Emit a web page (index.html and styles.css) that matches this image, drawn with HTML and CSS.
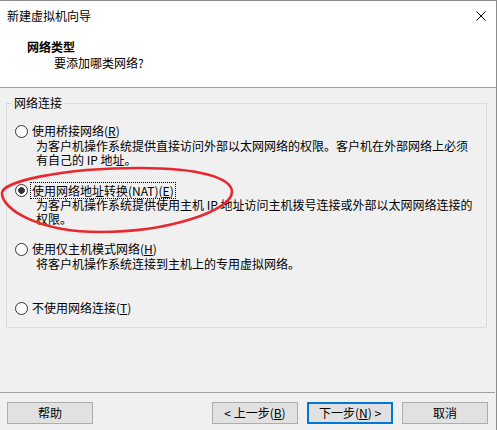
FILE: index.html
```html
<!DOCTYPE html>
<html lang="zh-CN">
<head>
<meta charset="utf-8">
<title>新建虚拟机向导</title>
<link rel="stylesheet" href="styles.css">
</head>
<body>
<div class="window">
  <div class="top">
    <div class="titlebar">
      <span class="title">新建虚拟机向导</span>
      <svg class="close" width="10" height="10" viewBox="0 0 10 10"><path d="M0.5 0.5 L9.5 9.5 M9.5 0.5 L0.5 9.5" stroke="#000" stroke-width="1" fill="none"/></svg>
    </div>
    <div class="header">
      <div class="h-title">网络类型</div>
      <div class="h-sub">要添加哪类网络?</div>
    </div>
  </div>
  <div class="body">
    <fieldset class="group">
      <legend>网络连接</legend>
      <div class="option">
        <div class="opt-label"><span class="radio"></span><span class="opt-text">使用桥接网络(<u>R</u>)</span></div>
        <div class="opt-desc">为客户机操作系统提供直接访问外部以太网网络的权限。客户机在外部网络上必须<br>有自己的 IP 地址。</div>
      </div>
      <div class="option">
        <div class="opt-label"><span class="radio checked"></span><span class="opt-text focus">使用网络地址转换(NAT)(<u>E</u>)</span></div>
        <div class="opt-desc">为客户机操作系统提供使用主机 IP 地址访问主机拨号连接或外部以太网网络连接的<br>权限。</div>
      </div>
      <div class="option">
        <div class="opt-label"><span class="radio"></span><span class="opt-text">使用仅主机模式网络(<u>H</u>)</span></div>
        <div class="opt-desc">将客户机操作系统连接到主机上的专用虚拟网络。</div>
      </div>
      <div class="option last">
        <div class="opt-label"><span class="radio"></span><span class="opt-text">不使用网络连接(<u>T</u>)</span></div>
      </div>
    </fieldset>
  </div>
  <div class="footer">
    <div class="sep"></div>
    <div class="buttons">
      <button class="btn">帮助</button>
      <span class="spacer"></span>
      <button class="btn">&lt; 上一步(<u>B</u>)</button>
      <button class="btn default">下一步(<u>N</u>) &gt;</button>
      <button class="btn">取消</button>
    </div>
  </div>
  <svg class="annotation" width="497" height="430" viewBox="0 0 497 430">
    <path d="M 2 193 C 2 182, 60 168, 140 168 C 200 168, 232 178, 232 192 C 232 210, 170 232, 100 232 C 40 232, 2 210, 2 193 Z" fill="none" stroke="#e8282e" stroke-width="2.6"/>
  </svg>
</div>
</body>
</html>
```

FILE: styles.css
```css
html, body {
  margin: 0;
  padding: 0;
  background: #f0f0f0;
}

body {
  font-family: "Noto Sans CJK SC", "Microsoft YaHei", sans-serif;
  font-size: 12px;
  color: #000;
}

.window {
  position: relative;
  width: 497px;
  height: 430px;
  box-sizing: border-box;
  border-top: 1px solid #8c8c8c;
  border-right: 1px solid #8c8c8c;
  background: #f0f0f0;
  overflow: hidden;
}

.top {
  height: 86px;
  background: #fff;
  border-bottom: 1px solid #a0a0a0;
}

.titlebar {
  height: 29px;
  display: flex;
  align-items: center;
  justify-content: space-between;
  padding: 0 10px 0 7px;
}

.title {
  line-height: 16px;
}

.close {
  display: block;
}

.header {
  margin-top: 9px;
  padding-left: 27px;
}

.h-title {
  font-weight: bold;
  line-height: 16px;
}

.h-sub {
  padding-left: 27px;
  line-height: 16px;
}

.body {
  padding: 7px 9px 0 6px;
}

.group {
  margin: 0;
  border: 1px solid #dcdcdc;
  padding: 12px 8px 11px 8px;
  min-inline-size: 0;
}

.group legend {
  padding: 0 2px;
  margin-left: -3px;
  line-height: 16px;
}

.option {
  margin-bottom: 15px;
}

.option.last {
  margin-bottom: 0;
}

.opt-label {
  display: flex;
  align-items: center;
  height: 16px;
  line-height: 16px;
  white-space: nowrap;
}

.radio {
  width: 13px;
  height: 13px;
  box-sizing: border-box;
  border: 1px solid #333;
  border-radius: 50%;
  background: #fff;
  margin-right: 4px;
  flex: none;
}

.radio.checked {
  background: radial-gradient(circle, #333 0, #333 3px, #fff 3.6px);
}

.opt-text u,
.btn u {
  text-decoration: underline;
  text-underline-offset: 1px;
}

.focus {
  outline: 1px dotted #000;
  padding: 0 1px;
  margin-left: -1px;
  line-height: 15px;
  height: 15px;
}

.opt-desc {
  padding-left: 21px;
  line-height: 14px;
  min-height: 28px;
  white-space: nowrap;
}

.footer {
  padding-top: 64px;
}

.sep {
  height: 1px;
  background: #a0a0a0;
  margin-right: 1px;
}

.buttons {
  display: flex;
  gap: 9px;
  margin-top: 9px;
  padding: 0 8px 0 7px;
}

.spacer {
  flex: 1;
}

.btn {
  width: 86px;
  height: 22px;
  box-sizing: border-box;
  border: 1px solid #adadad;
  background: #e1e1e1;
  font-family: "Noto Sans CJK SC", "Microsoft YaHei", sans-serif;
  font-size: 12px;
  color: #000;
  line-height: 18px;
  padding: 0;
  text-align: center;
  border-radius: 0;
}

.btn.default {
  border: 2px solid #0078d7;
}

.annotation {
  position: absolute;
  left: 0;
  top: -1px;
  pointer-events: none;
}
```
